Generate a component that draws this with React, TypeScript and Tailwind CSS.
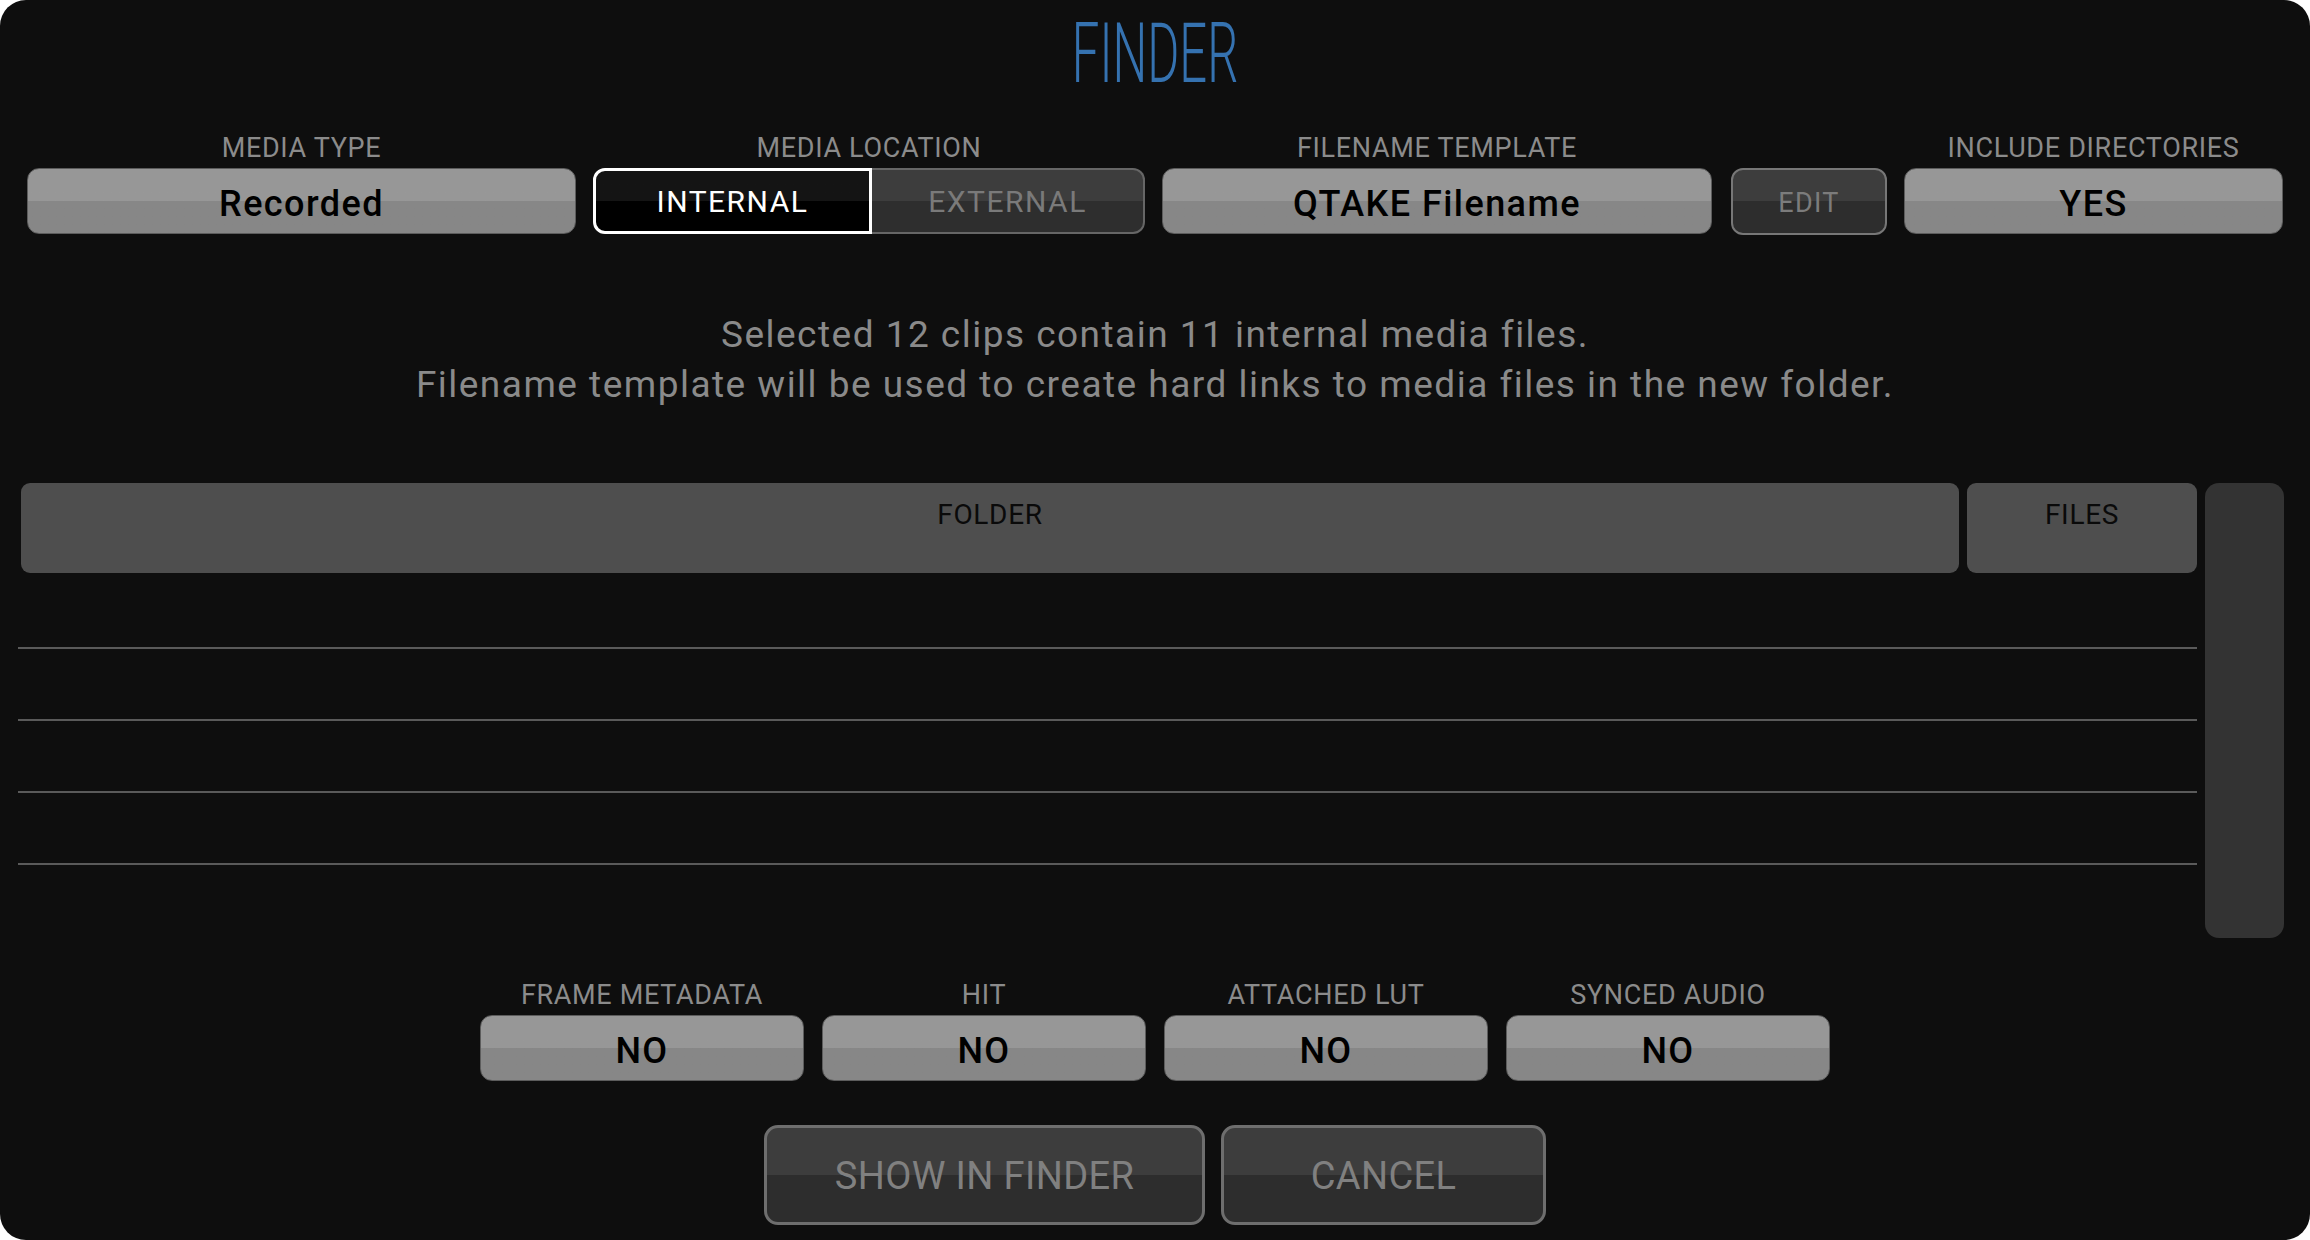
import React from "react";

// shared bits
const LIGHT_BTN =
  "flex items-center justify-center h-[66px] pt-[6px] rounded-[12px] border border-[#5c5c5c] bg-linear-to-b from-[#979797] from-50% to-[#878787] to-50% text-[36px] font-medium leading-none tracking-[0.04em] text-black";

function Field({
  label,
  className,
  children,
}: {
  label: string;
  className?: string;
  children: React.ReactNode;
}) {
  return (
    <div className={`flex flex-col ${className ?? ""}`}>
      <div className="mb-[6px] h-[27px] text-center text-[27px] leading-none tracking-wide text-[#8b8b8b]">
        {label}
      </div>
      {children}
    </div>
  );
}

function TableRow({ last }: { last?: boolean }) {
  return (
    <div
      className={`h-[72px] ${last ? "" : "border-b-2 border-[#5a5a5a]"}`}
    ></div>
  );
}

export default function App() {
  return (
    <div className="h-[1240px] w-[2310px] bg-white font-['Roboto','Liberation_Sans',sans-serif]">
      <div className="flex h-full flex-col overflow-hidden rounded-[26px] bg-[#0e0e0e]">
        {/* title */}
        <div className="flex h-[94px] justify-center pt-[12px]">
          <div className="scale-x-[0.59] text-[83px] font-light leading-none text-[#3572b0]">
            FINDER
          </div>
        </div>

        {/* options */}
        <div className="mt-[41px] flex gap-[17px] px-[27px]">
          <Field label="MEDIA TYPE" className="w-[549px]">
            <div className={LIGHT_BTN}>Recorded</div>
          </Field>
          <Field label="MEDIA LOCATION" className="w-[552px]">
            <div className="flex h-[66px] text-[30px] leading-none tracking-wider">
              <div className="flex w-[279px] items-center justify-center rounded-l-[12px] border-[3px] border-white bg-linear-to-b from-[#141414] from-50% to-black to-50% pt-[2px] text-white">
                INTERNAL
              </div>
              <div className="flex flex-1 items-center justify-center rounded-r-[12px] border-2 border-l-0 border-[#666] bg-linear-to-b from-[#3d3d3d] from-50% to-[#2e2e2e] to-50% pt-[2px] text-[#7a7a7a]">
                EXTERNAL
              </div>
            </div>
          </Field>
          <Field label="FILENAME TEMPLATE" className="w-[550px]">
            <div className={LIGHT_BTN}>QTAKE Filename</div>
          </Field>
          <Field label="" className="ml-[2px] w-[156px]">
            <div className="flex h-[67px] items-center justify-center rounded-[12px] border-2 border-[#777] bg-linear-to-b from-[#3d3d3d] from-50% to-[#2d2d2d] to-50% pt-[3px] text-[27px] leading-none tracking-wider text-[#7c7c7c]">
              EDIT
            </div>
          </Field>
          <Field label="INCLUDE DIRECTORIES" className="flex-1">
            <div className={LIGHT_BTN}>YES</div>
          </Field>
        </div>

        {/* info */}
        <div className="mt-[75px] text-center text-[37px] leading-[50px] tracking-[0.04em] text-[#8a8a8a]">
          <div>Selected 12 clips contain 11 internal media files.</div>
          <div>
            Filename template will be used to create hard links to media files
            in the new folder.
          </div>
        </div>

        {/* table */}
        <div className="mt-[73px] flex h-[455px] gap-[8px] pl-[21px] pr-[26px]">
          <div className="flex flex-1 flex-col">
            <div className="flex h-[90px] gap-[8px] text-[28px] leading-none tracking-wide text-[#0a0a0a]">
              <div className="flex-1 rounded-[9px] bg-[#4e4e4e] pt-[18px] text-center">
                FOLDER
              </div>
              <div className="w-[230px] rounded-[9px] bg-[#4e4e4e] pt-[18px] text-center">
                FILES
              </div>
            </div>
            <div className="-ml-[3px] mt-[4px]">
              <TableRow />
              <TableRow />
              <TableRow />
              <TableRow />
              <TableRow last />
            </div>
          </div>
          <div className="w-[79px] rounded-[14px] bg-[#333]"></div>
        </div>

        {/* flags */}
        <div className="mt-[44px] flex justify-center gap-[18px]">
          {["FRAME METADATA", "HIT", "ATTACHED LUT", "SYNCED AUDIO"].map(
            (l) => (
              <Field key={l} label={l} className="w-[324px]">
                <div className={LIGHT_BTN}>NO</div>
              </Field>
            )
          )}
        </div>

        {/* actions */}
        <div className="mt-[44px] flex justify-center gap-[16px] text-[38px] leading-none tracking-[0.01em] text-[#808080]">
          <div className="flex h-[100px] w-[441px] items-center justify-center rounded-[14px] border-[3px] border-[#6e6e6e] bg-linear-to-b from-[#3d3d3d] from-50% to-[#2d2d2d] to-50% pt-[1px]">
            SHOW IN FINDER
          </div>
          <div className="flex h-[100px] w-[325px] items-center justify-center rounded-[14px] border-[3px] border-[#6e6e6e] bg-linear-to-b from-[#3d3d3d] from-50% to-[#2d2d2d] to-50% pt-[1px]">
            CANCEL
          </div>
        </div>
      </div>
    </div>
  );
}
